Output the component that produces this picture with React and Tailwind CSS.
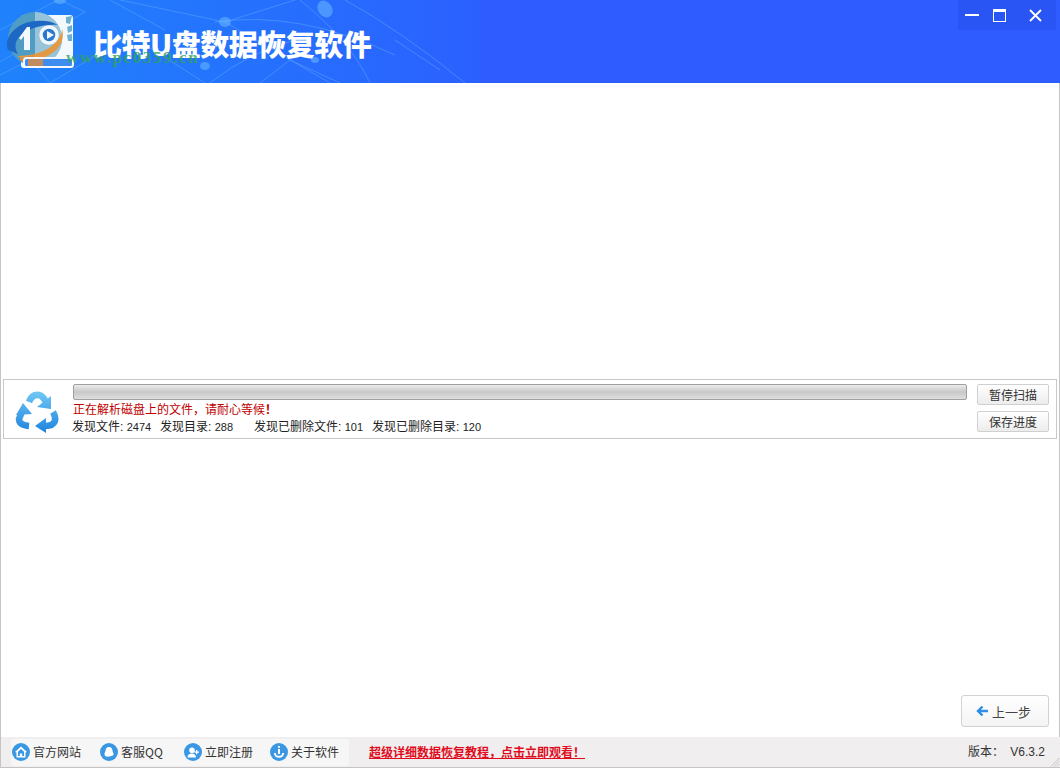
import React from 'react'

const cjk = "font-['Noto_Sans_CJK_SC','Liberation_Sans',sans-serif]"

function BannerLines() {
  return (
    <svg className="w-full h-full" viewBox="0 0 480 83" fill="none">
      <g stroke="#63aaff" strokeOpacity="0.5" strokeWidth="1">
        <path d="M0 30 L58 0 M0 62 L85 12 L60 0 M50 83 L130 35 L205 83 M120 0 L225 22 L330 83 M225 22 L295 0" />
        <path d="M215 22 Q300 10 395 55 M300 0 Q350 40 370 83 M345 0 Q400 30 465 83 M210 83 Q250 50 310 36 M110 0 L165 30" />
        <path d="M260 83 L290 60 L340 83 M395 40 L440 70 M0 75 L30 60 L50 83" />
      </g>
      <g fill="#6fc0ff" fillOpacity="0.5">
        <ellipse cx="225" cy="22" rx="6" ry="5" />
        <ellipse cx="325" cy="9" rx="7" ry="9" transform="rotate(-35 325 9)" />
        <ellipse cx="60" cy="1" rx="6" ry="3" />
        <ellipse cx="205" cy="66" rx="5" ry="4" />
        <ellipse cx="315" cy="60" rx="4" ry="3" />
      </g>
    </svg>
  )
}

function Logo() {
  return (
    <svg width="80" height="72" viewBox="0 0 80 72" fill="none">
      <rect x="21" y="15" width="52" height="53" rx="3" fill="#f3f8fd" />
      <circle cx="35" cy="39" r="27" fill="#4f9cc4" />
      <path d="M35 12 A27 27 0 0 1 62 39 A27 27 0 0 1 35 66 Z" fill="#a9cee0" fillOpacity="0.8" />
      <path d="M8 50 C3 36 18 22 36 21 C44 20 52 21 58 25 C44 24 28 28 20 36 C15 41 14 47 18 54 Z" fill="#1c68c4" />
      <path d="M62 29 C66 42 56 54 42 58 C34 60 24 60 17 56 C32 56 46 52 54 44 C59 39 62 34 62 29 Z" fill="#e49a42" />
      <path d="M20 58 L34 55 V66 A27 27 0 0 1 20 60 Z" fill="#d98a45" />
      <path d="M19 38 L27 27 H30 V50 H24 V36 L21 40 Z" fill="#f4f8fc" />
      <circle cx="49" cy="35" r="8" fill="#2a78d0" stroke="#f4f8fc" strokeWidth="3.500" />
      <path d="M47 31 L54 35 L47 39 Z" fill="#f4f8fc" />
      <path d="M66 17 L72 16 L70 24 L66 23 Z M67 27 L72 25 V31 L68 33 Z M67 35 L72 34 V41 H68 Z" fill="#6fb0cf" />
      <rect x="24" y="58" width="49" height="9" rx="2.500" fill="#3d8df0" stroke="#f4f8fc" strokeWidth="2" />
      <rect x="28" y="59" width="15" height="7" fill="#d98a45" fillOpacity="0.85" />
    </svg>
  )
}

function Recycle() {
  return (
    <svg width="55" height="52" viewBox="0 0 55 52" fill="none">
      <defs>
        <linearGradient id="rc" gradientUnits="userSpaceOnUse" x1="0" y1="6" x2="0" y2="50">
          <stop offset="0" stopColor="#72c8f5" />
          <stop offset="1" stopColor="#1a80dc" />
        </linearGradient>
      </defs>
      <g stroke="url(#rc)" strokeWidth="6.500">
        <path d="M19 17 Q22 9 29 10 Q33 11 36 17" />
        <path d="M12 27 L9 34 Q9 40 19 41" />
        <path d="M35 41 Q43 41 45 36 Q46 32 43 27" />
      </g>
      <g fill="url(#rc)">
        <path d="M41 11 L41 24 L27 22 Z" />
        <path d="M13 18 L22 29 L6 30 Z" />
        <path d="M25 41 L36 33 L36 48 Z" />
      </g>
    </svg>
  )
}

function CircleIcon({ children }) {
  return (
    <span className="w-[18px] h-[18px] rounded-full bg-[#3a97e4] flex items-center justify-center shrink-0">
      <svg width="14" height="14" viewBox="0 0 14 14" fill="#fff">{children}</svg>
    </span>
  )
}

function FooterLink({ icon, label, className }) {
  return (
    <div className={`flex items-center gap-[3px] ${className}`}>
      <CircleIcon>{icon}</CircleIcon>
      <span className="text-[12px] leading-none text-[#333]">{label}</span>
    </div>
  )
}

function Stat({ label, value, className }) {
  return (
    <span className={className}>
      {label}: <span className="text-[11px]">{value}</span>
    </span>
  )
}

export default function App() {
  return (
    <div className={`w-[1060px] h-[768px] flex flex-col overflow-hidden bg-white relative ${cjk}`}>
      {/* Title bar */}
      <header className="h-[83px] shrink-0 bg-[#2e5cff] flex relative">
        <div className="w-[480px] h-full bg-gradient-to-r from-[#1f82fb] to-[#2b60ff] relative">
          <BannerLines />
        </div>
        <div className="absolute left-0 top-0">
          <Logo />
        </div>
        <h1 className="absolute left-[93px] top-[22px] text-[29px] leading-[42px] font-black text-white whitespace-nowrap tracking-[-0.5px]">
          比特U盘数据恢复软件
        </h1>
        <span className="absolute left-[66px] top-[48px] text-[17px] leading-5 font-bold text-[#2fa35a]/80 font-['Liberation_Serif',serif] tracking-[1.6px]">
          www.pc0359.cn
        </span>
        <div className="absolute right-[4px] top-0 w-[98px] h-[30px] bg-[#2a55f5] flex items-center">
          <span className="ml-[7px] w-[14px] h-[2px] bg-white" />
          <span className="ml-[14px] w-[13px] h-[13px] border border-white border-t-[3px]" />
          <svg className="ml-[23px]" width="13" height="13" viewBox="0 0 13 13" stroke="#fff" strokeWidth="1.800">
            <path d="M1 1 L12 12 M12 1 L1 12" />
          </svg>
        </div>
      </header>

      {/* Content */}
      <main className="flex-1 border-x border-[#c4c4c4] pt-[296px] px-[2px] flex flex-col">
        <section className="h-[60px] border border-[#c8c8c8] flex">
          <div className="w-[68px] shrink-0 pl-[6px] pt-[5px]">
            <Recycle />
          </div>
          <div className="flex-1 pt-[4px] min-w-0">
            <div className="ml-px h-[16px] w-[894px] rounded-[2px] border border-[#a0a0a0] bg-gradient-to-b from-[#ececec] via-[#c8c8c8] to-[#dedede]" />
            <p className="mt-px text-[12px] leading-[16px] text-[#c00000] ml-px">正在解析磁盘上的文件，请耐心等候<span className="font-bold">！</span></p>
            <div className="mt-[2px] flex text-[12px] leading-[16px] text-[#222] whitespace-nowrap font-['Liberation_Sans','Noto_Sans_CJK_SC',sans-serif]">
              <Stat className="w-[88px]" label="发现文件" value="2474" />
              <Stat className="w-[94px]" label="发现目录" value="288" />
              <Stat className="w-[118px]" label="发现已删除文件" value="101" />
              <Stat label="发现已删除目录" value="120" />
            </div>
          </div>
          <div className="w-[79px] shrink-0 pt-[4px] flex flex-col gap-[6px]">
            <button className="w-[72px] h-[21px] rounded-[2px] border border-[#d0d0d0] bg-gradient-to-b from-white to-[#ececec] text-[12px] leading-none text-[#333]">暂停扫描</button>
            <button className="w-[72px] h-[21px] rounded-[2px] border border-[#d0d0d0] bg-gradient-to-b from-white to-[#ececec] text-[12px] leading-none text-[#333]">保存进度</button>
          </div>
        </section>
        <div className="flex-1 flex justify-end items-end pb-[10px] pr-[8px]">
          <button className="w-[88px] h-[32px] rounded-[3px] border border-[#d2d2d2] bg-gradient-to-b from-white to-[#f4f4f4] flex items-center pl-[14px] gap-[3px] text-[13px] leading-none text-[#444]">
            <svg width="13" height="12" viewBox="0 0 13 12" fill="none" stroke="#2f8fe6" strokeWidth="2.400">
              <path d="M6.500 1.500 L2 6 L6.500 10.500 M2 6 H12" />
            </svg>
            上一步
          </button>
        </div>
      </main>

      {/* Status bar */}
      <footer className="h-[31px] shrink-0 bg-[#f0eeee] border-b border-l border-[#c4c4c4] flex items-center relative">
        <div className="ml-[10px] w-[338px] h-[27px] bg-[#f6f6f6] flex items-center">
          <FooterLink
            className="ml-[1px] w-[88px]"
            label="官方网站"
            icon={<path fillRule="evenodd" d="M7 1.500 L13 7 L11.500 7.500 V12.500 H2.500 V7.500 L1 7 Z M7 4 L4 6.800 V11 H5.800 V8.500 H8.200 V11 H10 V6.800 Z" />}
          />
          <FooterLink
            className="w-[84px]"
            label="客服QQ"
            icon={<path d="M7 2 C9.500 2 10.500 4 10.500 6 C11.500 8 12 10 11 10.500 C5 12.500 3 11.500 3 10.500 C2 10 2.500 8 3.500 6 C3.500 4 4.500 2 7 2 Z" />}
          />
          <FooterLink
            className="w-[86px]"
            label="立即注册"
            icon={<path d="M6 2.500 A2.800 2.800 0 1 1 6 8.100 A2.800 2.800 0 1 1 6 2.500 Z M1.500 12.500 C1.500 9.500 3.500 8.500 6 8.500 C8.500 8.500 9.500 9.500 10 12.500 Z M10 5 H11.300 V6.500 H13 V7.800 H11.300 V9.300 H10 V7.800 H8.500 V6.500 H10 Z" />}
          />
          <FooterLink
            label="关于软件"
            icon={<path d="M6 1 H8 V2.800 H6 Z M6 4 H8 V9 H6 Z M2 8 H3.800 C3.800 10 5 10.800 7 10.800 C9 10.800 10.200 10 10.200 8 H12 C12 11 10 12.800 7 12.800 C4 12.800 2 11 2 8 Z" />}
          />
        </div>
        <a className="ml-[20px] text-[12px] leading-none font-bold text-[#e00b1c] underline whitespace-nowrap">超级详细数据恢复教程，点击立即观看！</a>
        <span className="absolute right-[15px] top-[7px] text-[12px] leading-[16px] text-[#333] whitespace-nowrap font-['Liberation_Sans','Noto_Sans_CJK_SC',sans-serif]">版本： <span className="ml-[3px]">V6.3.2</span></span>
        <svg className="absolute right-0 bottom-0" width="10" height="10" viewBox="0 0 10 10" stroke="#c4c4c4">
          <path d="M9.500 1 L1 9.500 M9.500 4 L4 9.500 M9.500 7 L7 9.500" />
        </svg>
      </footer>
    </div>
  )
}
